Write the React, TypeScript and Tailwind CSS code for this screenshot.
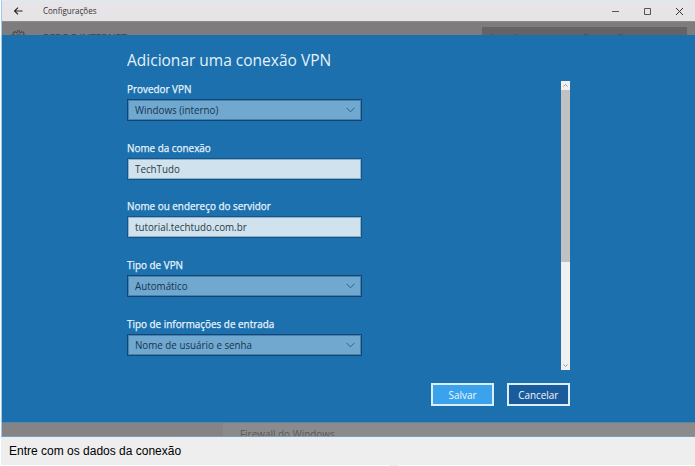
type FieldProps = {
  label: string;
  value: string;
  select?: boolean;
  heightClass?: string;
};

function Field({ label, value, select, heightClass = "h-[59px]" }: FieldProps) {
  return (
    <div className={`${heightClass} shrink-0`}>
      <div className="h-[17px] w-[235px] text-[11px] leading-[14px] font-medium text-[#e9f5fd] [-webkit-text-stroke:0.25px_#e9f5fd]">
        <span className="inline-block origin-left scale-x-[0.9] whitespace-nowrap">{label}</span>
      </div>
      <div
        className={`flex h-[22px] w-[235px] items-center justify-between border pr-[6px] pl-[7px] text-[11px] ${
          select
            ? "border-[#0f4677] bg-[#70a8cf] text-[#16354f] shadow-[inset_0_0_0_1px_#4a82ad]"
            : "border-[#165488] bg-[#cfe2ed] text-[#2b3a46] shadow-[inset_0_0_0_1px_#8fb0c8]"
        }`}
      >
        <span className="inline-block origin-left scale-x-[0.89] leading-[16px] whitespace-nowrap">{value}</span>
        {select && (
          <svg width="9" height="6" viewBox="0 0 9 6" fill="none" stroke="#2d648f" strokeWidth="1">
            <path d="M0.5 0.8 4.5 4.8 8.5 0.8" />
          </svg>
        )}
      </div>
    </div>
  );
}

export default function App() {
  return (
    <div className="flex h-[466px] w-[695px] flex-col overflow-hidden bg-white pl-px font-['Open_Sans','Noto_Sans',sans-serif]">
      <div className="flex h-[437px] flex-col border-t border-b border-l border-t-[#dceaf5] border-b-[#76a0c1] border-l-[#9ecbe9]">
        <header className="flex h-[20px] shrink-0 items-center bg-[#e6e4e7] pr-[12px] pl-[12px] text-[#333]">
          <svg width="9" height="8" viewBox="0 0 9 8" fill="none" stroke="#222" strokeWidth="1.1">
            <path d="M8.5 4H0.8M4 0.6 0.6 4 4 7.4" />
          </svg>
          <span className="ml-[20px] inline-block origin-left scale-x-[0.89] text-[9px] leading-[12px] whitespace-nowrap">
            Configurações
          </span>
          <div className="ml-auto flex items-center">
            <svg width="7" height="7" viewBox="0 0 7 7" stroke="#555">
              <path d="M0 3.5H7" />
            </svg>
            <svg className="ml-[25px]" width="7" height="7" viewBox="0 0 7 7" fill="none" stroke="#555">
              <path d="M0.5 0.5H6.5V6.5H0.5Z" />
            </svg>
            <svg className="ml-[25px]" width="7" height="7" viewBox="0 0 7 7" stroke="#333">
              <path d="M0 0 7 7M7 0 0 7" />
            </svg>
          </div>
        </header>

        <div className="flex h-[14px] shrink-0 items-start overflow-hidden border-t border-[#8d8b8d] bg-[#7e7c7d] pr-[8px] pl-[9px]">
          <svg className="mt-[8px] shrink-0" width="15" height="15" viewBox="0 0 15 15" fill="none" stroke="#504f50" strokeWidth="1.1">
            <path d="M1 7V5L3 5 2 3 4 1.5 5.5 3 6.5 2.5V0.8H8.5V2.5L9.5 3 11 1.5 13 3 12 5 14 5V7M4 7C4.5 4 10.5 4 11 7" />
          </svg>
          <span className="mt-[9px] ml-[17px] inline-block origin-left scale-x-[0.84] text-[12px] leading-[16px] font-semibold whitespace-nowrap text-[#4d4c4d]">
            REDE E INTERNET
          </span>
          <div className="mt-[5px] ml-auto h-[20px] w-[205px] bg-[#656364] pt-[3px] pl-[8px] text-[11px] leading-[16px] text-[#4b4a4b]">
            <span className="block whitespace-nowrap">Localizar uma configuração</span>
          </div>
        </div>

        <main className="flex h-[387px] shrink-0 flex-col bg-[#1b70ad] pr-[125px] pl-[125px]">
          <h1 className="mt-[13px] h-[24px] text-[17px] leading-[24px] text-[#e3f2fc]">
            <span className="inline-block origin-left scale-x-[0.912] whitespace-nowrap">Adicionar uma conexão VPN</span>
          </h1>
          <div className="mt-[9px] flex h-[289px] justify-between">
            <div className="flex flex-col pt-px">
              <Field label="Provedor VPN" value="Windows (interno)" select />
              <Field label="Nome da conexão" value="TechTudo" heightClass="h-[58px]" />
              <Field label="Nome ou endereço do servidor" value="tutorial.techtudo.com.br" />
              <Field label="Tipo de VPN" value="Automático" select />
              <Field label="Tipo de informações de entrada" value="Nome de usuário e senha" select heightClass="h-[39px]" />
            </div>
            <div className="flex w-[9px] flex-col items-center bg-[#f0f0f0]">
              <svg className="mt-[2px]" width="5" height="5" viewBox="0 0 5 5" fill="none" stroke="#999">
                <path d="M0.5 3.5 2.5 1.5 4.5 3.5" />
              </svg>
              <div className="mt-[2px] h-[172px] w-[9px] bg-[#c1c1c1]" />
              <svg className="mt-auto mb-[2px]" width="5" height="5" viewBox="0 0 5 5" fill="none" stroke="#999">
                <path d="M0.5 1.5 2.5 3.5 4.5 1.5" />
              </svg>
            </div>
          </div>
          <div className="mt-[13px] flex justify-end gap-[13px] text-[11px] text-[#f0f8ff]">
            <button className="h-[23px] w-[63px] border-2 border-[#dceefb] bg-[#3aa3ec] leading-[19px]">
              <span className="inline-block scale-x-[0.9]">Salvar</span>
            </button>
            <button className="h-[23px] w-[63px] border-2 border-[#dceefb] bg-[#1a5b9c] leading-[19px]">
              <span className="inline-block scale-x-[0.9]">Cancelar</span>
            </button>
          </div>
        </main>

        <div className="flex min-h-0 flex-1 overflow-hidden border-t border-[#5687ad] bg-[#8c8b8c]">
          <div className="w-[221px] shrink-0 bg-[#858384]" />
          <span className="mt-[3px] ml-[17px] inline-block origin-left scale-x-[0.9] text-[11px] leading-[16px] whitespace-nowrap text-[#5a595a]">
            Firewall do Windows
          </span>
        </div>
      </div>
      <footer className="h-[28px] shrink-0 bg-[#eee] pl-[8px] font-['Liberation_Sans',Arial,sans-serif] text-[12px] leading-[28px] whitespace-nowrap text-black">
        Entre com os dados da conexão
      </footer>
      <div className="ml-[388px] h-px w-[10px] bg-[#eee]" />
    </div>
  );
}
